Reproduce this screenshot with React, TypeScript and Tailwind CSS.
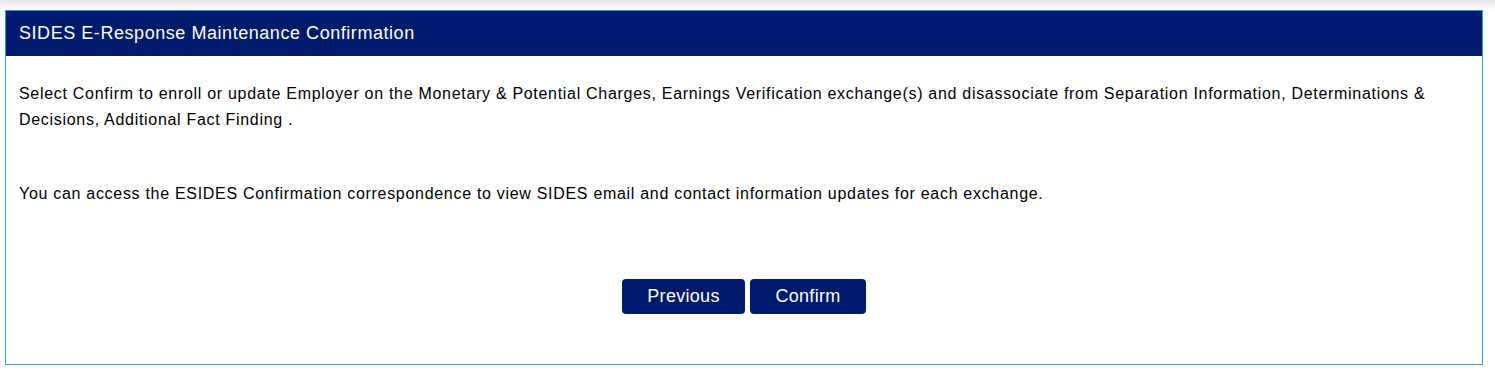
export default function App() {
  return (
    <div className="min-h-[379px] bg-white font-['Liberation_Sans',Arial,sans-serif]">
      {/* top shadow from the page bar above */}
      <div className="h-[10px] bg-gradient-to-b from-[#e6e6e6] to-white" />

      <div className="mx-[5px] w-[1478px] border border-[#2a9fd2] bg-white">
        {/* Header */}
        <div className="flex h-[45px] items-center bg-[#001a6e] px-[13px]">
          <h1 className="text-[18px] tracking-[0.55px] text-white">SIDES E-Response Maintenance Confirmation</h1>
        </div>

        {/* Body */}
        <div className="px-[13px] pt-[25px] text-[16px] leading-[26px] tracking-[0.7px] text-black">
          <p>
            Select Confirm to enroll or update Employer on the Monetary &amp; Potential Charges, Earnings Verification
            exchange(s) and disassociate from Separation Information, Determinations &amp; Decisions, Additional Fact
            Finding .
          </p>
          <p className="mt-[48px]">
            You can access the ESIDES Confirmation correspondence to view SIDES email and contact information updates
            for each exchange.
          </p>
        </div>

        {/* Actions */}
        <div className="flex justify-center gap-[5px] pt-[72px] pb-[50px]">
          <button className="h-[35px] w-[123px] rounded-[4px] bg-[#001a6e] text-[18px] tracking-[0.3px] text-white">
            Previous
          </button>
          <button className="h-[35px] w-[116px] rounded-[4px] bg-[#001a6e] text-[18px] tracking-[0.3px] text-white">
            Confirm
          </button>
        </div>
      </div>
    </div>
  )
}
